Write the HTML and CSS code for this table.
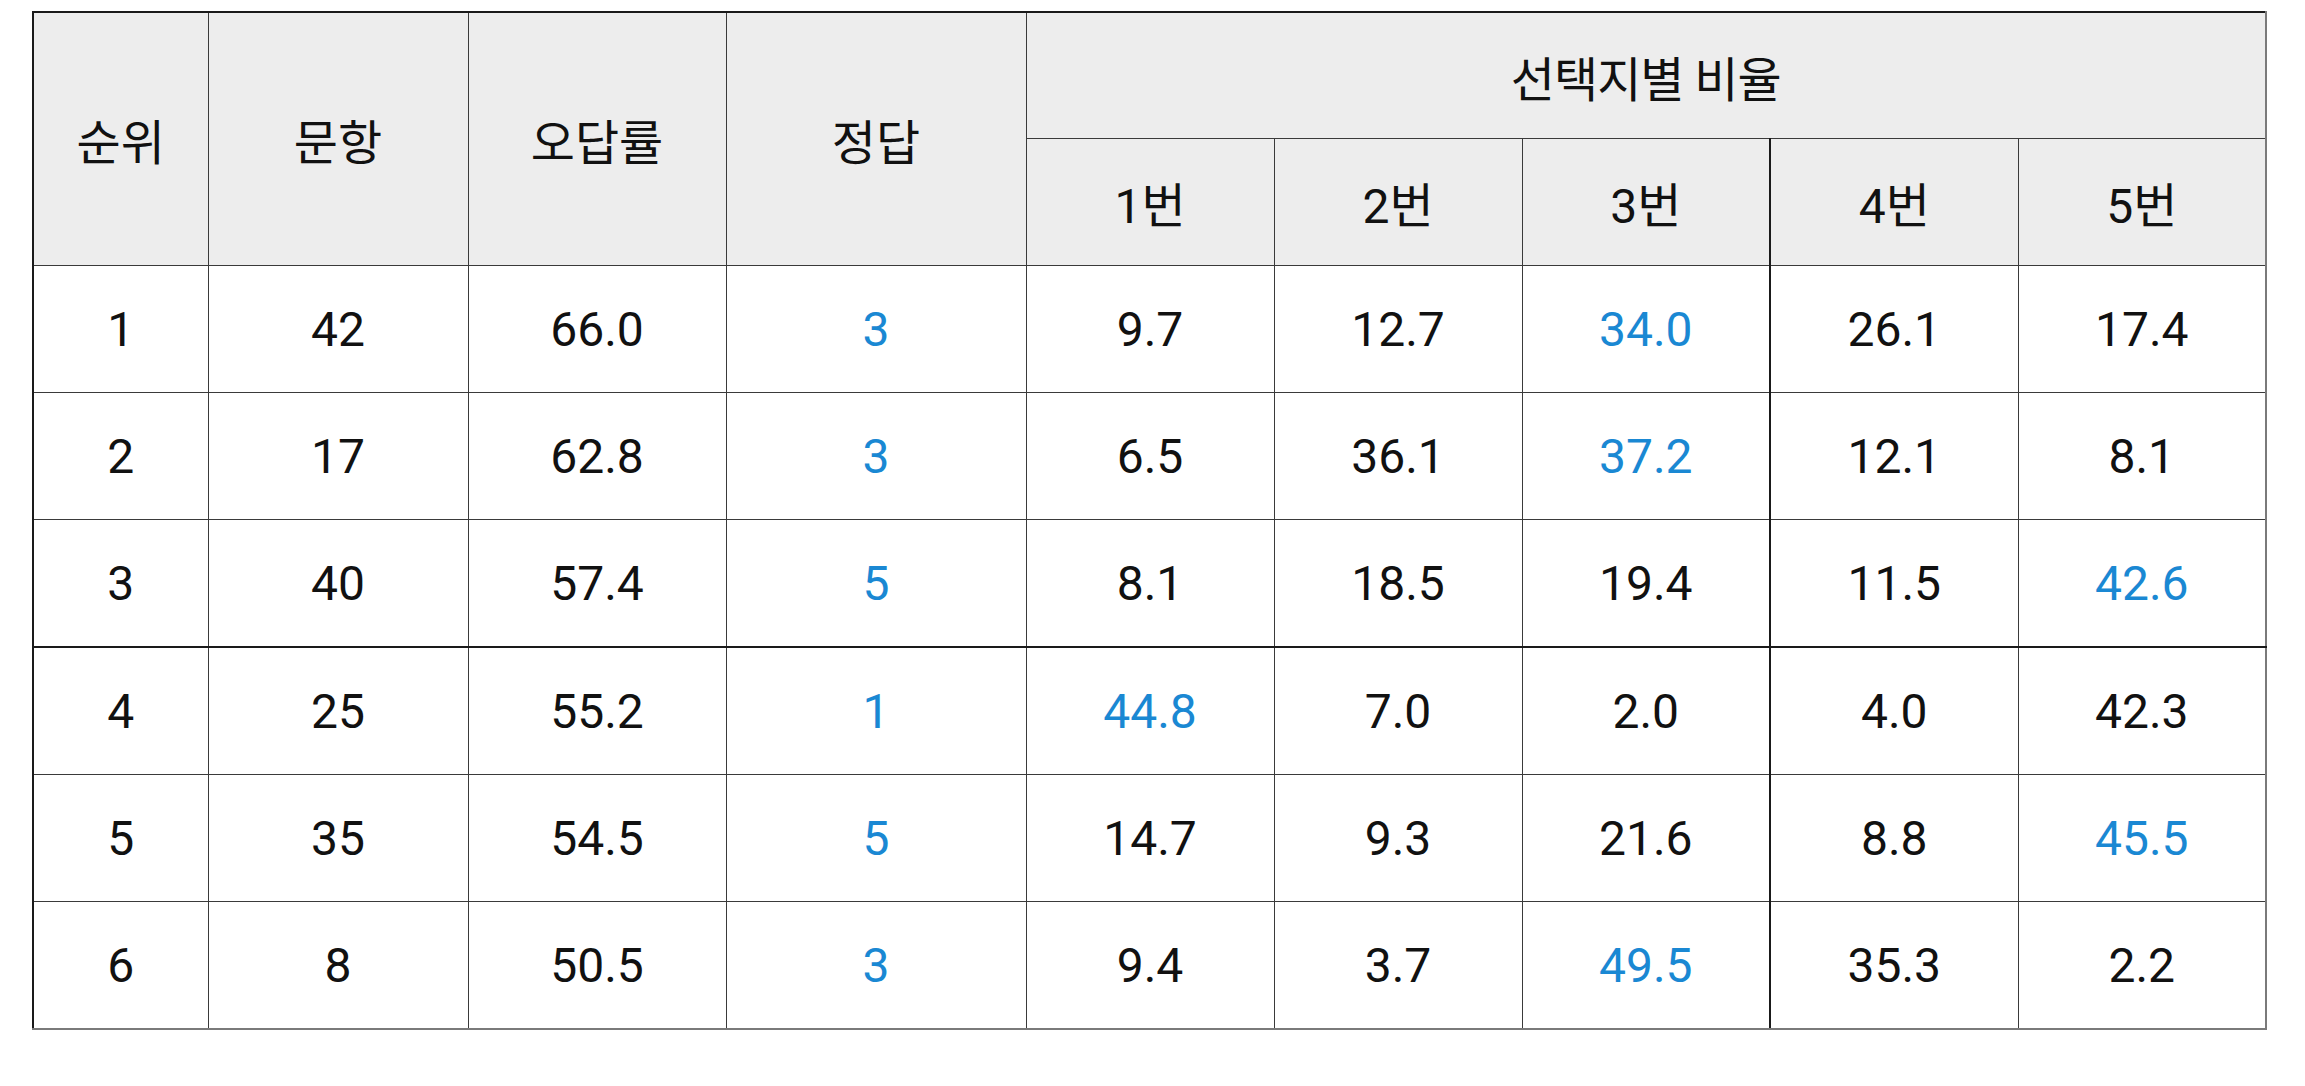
FILE: index.html
```html
<!DOCTYPE html>
<html lang="ko">
<head>
<meta charset="utf-8">
<link rel="stylesheet" href="styles.css">
</head>
<body>
<div class="wrap">
<table class="stats">
  <colgroup>
    <col class="c-rank"><col class="c-item"><col class="c-rate"><col class="c-ans">
    <col class="c-opt"><col class="c-opt"><col class="c-opt"><col class="c-opt"><col class="c-opt">
  </colgroup>
  <thead>
    <tr class="h1">
      <th rowspan="2">순위</th>
      <th rowspan="2">문항</th>
      <th rowspan="2">오답률</th>
      <th rowspan="2">정답</th>
      <th colspan="5" class="group">선택지별 비율</th>
    </tr>
    <tr class="h2">
      <th>1번</th><th>2번</th><th>3번</th><th class="sep">4번</th><th>5번</th>
    </tr>
  </thead>
  <tbody>
    <tr><td>1</td><td>42</td><td>66.0</td><td class="hl">3</td><td>9.7</td><td>12.7</td><td class="hl">34.0</td><td class="sep">26.1</td><td>17.4</td></tr>
    <tr><td>2</td><td>17</td><td>62.8</td><td class="hl">3</td><td>6.5</td><td>36.1</td><td class="hl">37.2</td><td class="sep">12.1</td><td>8.1</td></tr>
    <tr class="thick"><td>3</td><td>40</td><td>57.4</td><td class="hl">5</td><td>8.1</td><td>18.5</td><td>19.4</td><td class="sep">11.5</td><td class="hl">42.6</td></tr>
    <tr><td>4</td><td>25</td><td>55.2</td><td class="hl">1</td><td class="hl">44.8</td><td>7.0</td><td>2.0</td><td class="sep">4.0</td><td>42.3</td></tr>
    <tr><td>5</td><td>35</td><td>54.5</td><td class="hl">5</td><td>14.7</td><td>9.3</td><td>21.6</td><td class="sep">8.8</td><td class="hl">45.5</td></tr>
    <tr><td>6</td><td>8</td><td>50.5</td><td class="hl">3</td><td>9.4</td><td>3.7</td><td class="hl">49.5</td><td class="sep">35.3</td><td>2.2</td></tr>
  </tbody>
</table>
</div>
</body>
</html>
```
FILE: styles.css
```css
html, body {
  margin: 0;
  padding: 0;
  background: #ffffff;
}
.wrap {
  padding: 11px 0 0 32px;
}
.stats {
  border-collapse: collapse;
  table-layout: fixed;
  width: 2235px;
  font-family: Roboto, "Noto Sans CJK KR", sans-serif;
  font-size: 48px;
  color: #111;
  border-top: 2px solid #1a1a1a;
  border-left: 2px solid #1a1a1a;
  border-right: 2px solid #7a7a7a;
  border-bottom: 2px solid #7a7a7a;
}
.c-rank { width: 175px; }
.c-item { width: 260px; }
.c-rate { width: 258px; }
.c-ans { width: 300px; }
.c-opt { width: 248px; }
.stats th,
.stats td {
  border: 1px solid #3a3a3a;
  text-align: center;
  vertical-align: middle;
  padding: 0;
}
.stats th {
  background: #ededed;
  font-weight: normal;
  color: #111;
}
.stats th.group {
  letter-spacing: -1px;
}
.h1 th { height: 125px; }
.h2 th { height: 126px; }
.stats td {
  height: 125px;
  padding-top: 1px;
}
.stats td.hl {
  color: #1a88d3;
}
.stats .sep {
  border-left: 2px solid #1a1a1a;
}
.stats tr.thick td {
  border-bottom: 2px solid #1a1a1a;
}
.stats tbody tr:last-child td {
  border-bottom: 2px solid #7a7a7a;
}
```
